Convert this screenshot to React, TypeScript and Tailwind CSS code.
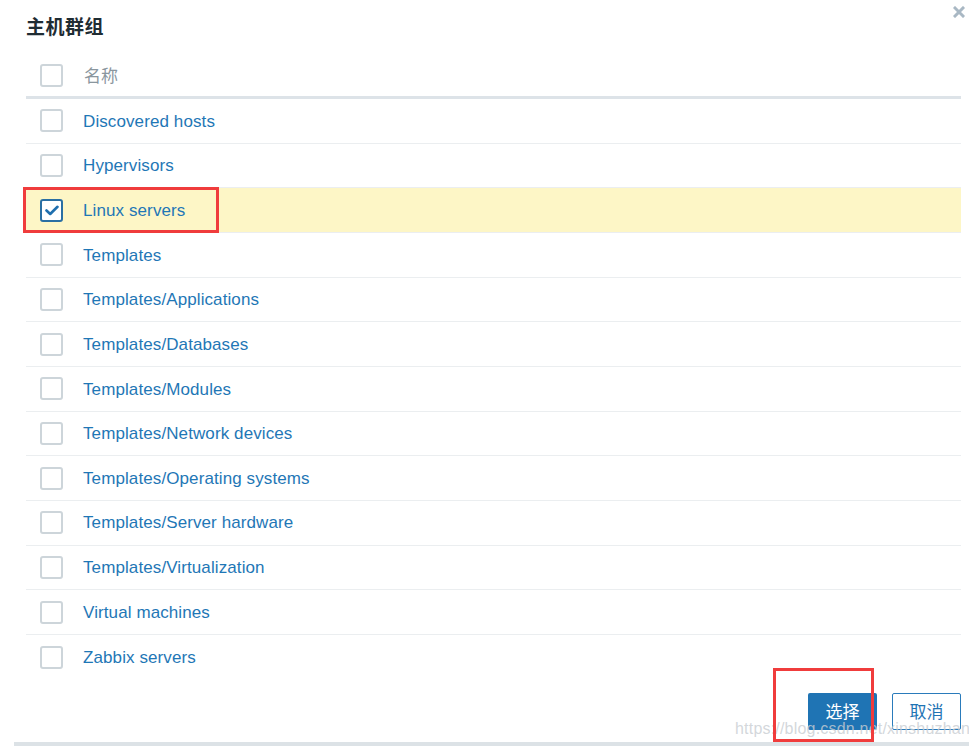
import React from 'react';

const groups = [
  'Discovered hosts',
  'Hypervisors',
  'Linux servers',
  'Templates',
  'Templates/Applications',
  'Templates/Databases',
  'Templates/Modules',
  'Templates/Network devices',
  'Templates/Operating systems',
  'Templates/Server hardware',
  'Templates/Virtualization',
  'Virtual machines',
  'Zabbix servers',
];

const Checkbox: React.FC<{ checked?: boolean }> = ({ checked }) => (
  <div
    className={
      checked
        ? 'w-[23px] h-[23px] rounded-[3px] border-2 border-[#2a6fa3] bg-white flex items-center justify-center shrink-0'
        : 'w-[23px] h-[23px] rounded-[3px] border-2 border-[#cdd5da] bg-white shrink-0'
    }
  >
    {checked && (
      <svg width="14" height="11" viewBox="0 0 14 11" fill="none">
        <path d="M1.5 5.5 L5.2 9 L12.5 1.8" stroke="#1f6fae" strokeWidth="2.6" strokeLinecap="round" strokeLinejoin="round" />
      </svg>
    )}
  </div>
);

export default function App() {
  const font = { fontFamily: '"Liberation Sans", Arial, "Noto Sans CJK SC", sans-serif' };
  const cjk = { fontFamily: '"Noto Sans CJK SC", sans-serif' };

  return (
    <div className="relative w-[969px] h-[746px] bg-white overflow-hidden" style={font}>
      {/* close */}
      <div className="absolute left-[953px] top-[6px]">
        <svg width="12" height="12" viewBox="0 0 12 12">
          <path d="M2 2 L10 10 M10 2 L2 10" stroke="#a9b8c4" strokeWidth="3" strokeLinecap="square" />
        </svg>
      </div>

      <div className="h-[54px] pl-[26px] flex items-center">
        <h2 className="text-[19px] font-bold text-[#1f2c33] tracking-[0.5px] -mt-[2px]" style={cjk}>
          主机群组
        </h2>
      </div>

      <div className="ml-[26px] w-[935px]">
        <div className="h-[45px] flex items-center pl-[14px] border-b-[3px] border-[#dde3e8]">
          <Checkbox />
          <span className="ml-[21px] text-[17px] text-[#8a969e]" style={cjk}>
            名称
          </span>
        </div>
        {groups.map((name, i) => (
          <div
            key={name}
            className={
              'h-[44.67px] flex items-center pl-[14px] border-b border-[#ebeef0] ' +
              (i === 2 ? 'bg-[#fdf6c6]' : 'bg-white') +
              (i === groups.length - 1 ? ' border-b-0' : '')
            }
          >
            <Checkbox checked={i === 2} />
            <span className="ml-[20px] text-[17px] tracking-[0.1px] text-[#1f77b6] pt-[1px]">{name}</span>
          </div>
        ))}
      </div>

      <div className="flex justify-end gap-[15px] pr-[8px] mt-[13px]">
        <button className="w-[69px] h-[37px] rounded-[2px] bg-[#1f74b4] text-white text-[17px]" style={cjk}>
          选择
        </button>
        <button className="w-[69px] h-[37px] rounded-[2px] bg-white border border-[#2a7bbb] text-[#1f74b4] text-[17px]" style={cjk}>
          取消
        </button>
      </div>

      <div className="absolute left-[14px] right-0 top-[742px] h-[4px] bg-[#dce2e6]" />

      {/* watermark */}
      <div className="absolute left-[735px] top-[717px] text-[16px] text-[#c8cdd2]/80 tracking-[0.2px] pointer-events-none">
        https://blog.csdn.net/xinshuzhan
      </div>

      {/* annotation boxes */}
      <div className="absolute left-[23px] top-[187px] w-[196px] h-[46px] border-[3px] border-[#f03c3c]" />
      <div className="absolute left-[773px] top-[668px] w-[101px] h-[74px] border-[3px] border-[#f03c3c]" />
    </div>
  );
}
